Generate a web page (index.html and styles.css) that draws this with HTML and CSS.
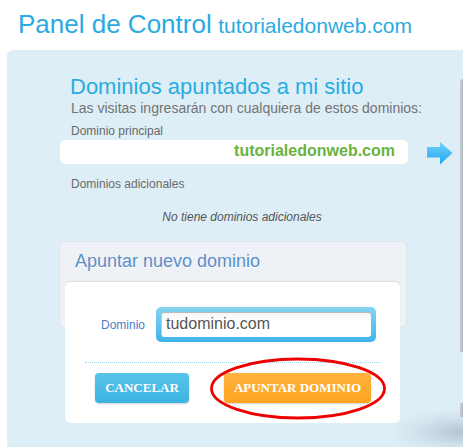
FILE: index.html
```html
<!DOCTYPE html>
<html lang="es">
<head>
<meta charset="utf-8">
<title>Panel de Control</title>
<link rel="stylesheet" href="styles.css">
</head>
<body>
<div class="header"><span class="h-big">Panel de Control</span> <span class="h-small">tutorialedonweb.com</span></div>
<div class="panel">
  <div class="edge edge-top"></div>
  <div class="edge edge-bottom"></div>
  <div class="floor-shadow"></div>
  <div class="section">
    <h2 class="heading">Dominios apuntados a mi sitio</h2>
    <p class="subtitle">Las visitas ingresarán con cualquiera de estos dominios:</p>
    <p class="label">Dominio principal</p>
    <div class="main-row">
      <div class="main-domain">tutorialedonweb.com</div>
      <svg class="arrow" width="26" height="23" viewBox="0 0 26 23">
        <defs>
          <linearGradient id="ag" x1="0" y1="0" x2="0" y2="1">
            <stop offset="0" stop-color="#6fd3fc"/>
            <stop offset="1" stop-color="#22a3ec"/>
          </linearGradient>
        </defs>
        <path d="M0 5 H13 V0 L25.5 11 L13 22.5 V15.5 H0 Z" fill="url(#ag)"/>
      </svg>
    </div>
    <p class="label label-extra">Dominios adicionales</p>
    <p class="empty">No tiene dominios adicionales</p>
    <div class="box">
      <h3 class="box-title">Apuntar nuevo dominio</h3>
      <div class="box-body">
        <div class="field-row">
          <span class="field-label">Dominio</span>
          <div class="input-frame"><div class="input-inner">tudominio.com</div></div>
        </div>
        <div class="divider"></div>
        <div class="buttons">
          <span class="btn btn-cancel">CANCELAR</span>
          <span class="btn btn-ok">APUNTAR DOMINIO</span>
        </div>
        <svg class="circle" width="182" height="66" viewBox="0 0 182 66">
          <ellipse cx="90" cy="32.5" rx="86.5" ry="29.5" fill="none" stroke="#ee0000" stroke-width="2.8"/>
        </svg>
      </div>
    </div>
  </div>
</div>
</body>
</html>
```
FILE: styles.css
```css
html, body {
  margin: 0;
  padding: 0;
  background: #ffffff;
  font-family: "Liberation Sans", Arial, sans-serif;
  overflow: hidden;
}

.header {
  height: 50px;
  box-sizing: border-box;
  padding: 9px 0 0 18px;
  line-height: 30px;
  color: #29aae2;
  white-space: nowrap;
}

.h-big {
  font-size: 26px;
}

.h-small {
  font-size: 21px;
  margin-left: 2px;
}

.panel {
  position: relative;
  overflow: hidden;
  margin-left: 7px;
  height: 397px;
  background: #ddeef7;
  border-top-left-radius: 6px;
  padding: 23px 0 0 53px;
  box-sizing: border-box;
}

.edge {
  position: absolute;
  left: 453px;
  width: 3px;
  background: linear-gradient(to right, #c9ced3, #b6bcc2);
}

.edge-top {
  top: 29px;
  height: 273px;
  border-top-left-radius: 3px;
}

.edge-bottom {
  top: 353px;
  height: 14px;
}

.floor-shadow {
  position: absolute;
  left: 380px;
  top: 358px;
  width: 150px;
  height: 48px;
  background: radial-gradient(ellipse at center, rgba(130, 145, 160, 0.45) 0%, rgba(160, 175, 190, 0.2) 40%, rgba(221, 238, 247, 0) 70%);
}

.section {
  width: 348px;
}

.heading {
  margin: 0 0 0 10px;
  font-size: 22px;
  font-weight: normal;
  line-height: 27px;
  color: #2aace2;
  white-space: nowrap;
}

.subtitle {
  margin: 0 0 0 11px;
  font-size: 14px;
  line-height: 16px;
  color: #737373;
  white-space: nowrap;
}

.label {
  margin: 8px 0 0 11px;
  font-size: 12px;
  line-height: 14px;
  color: #6a6a6a;
}

.label-extra {
  margin-top: 12px;
}

.main-row {
  display: flex;
  align-items: flex-start;
  gap: 19px;
  margin-top: 2px;
}

.main-domain {
  flex: none;
  width: 348px;
  height: 24px;
  box-sizing: border-box;
  background: #ffffff;
  border-radius: 5px;
  padding-right: 13px;
  text-align: right;
  font-size: 16px;
  font-weight: bold;
  line-height: 22px;
  color: #6ab23e;
}

.arrow {
  flex: none;
  margin-top: 2px;
  display: block;
}

.empty {
  margin: 19px 0 0;
  padding-left: 16px;
  text-align: center;
  font-size: 12px;
  line-height: 14px;
  font-style: italic;
  color: #555555;
}

.box {
  margin: 17px 0 0 -1px;
  width: 348px;
  height: 87px;
  box-sizing: border-box;
  background: #eef2f7;
  border: 1px solid #dde4ec;
  border-radius: 5px;
}

.box-title {
  margin: 8px 0 0 15px;
  font-size: 18px;
  font-weight: normal;
  line-height: 22px;
  color: #5a8ec7;
  text-shadow: 0 1px 0 #ffffff;
}

.box-body {
  position: relative;
  margin: 10px 0 0 5px;
  width: 335px;
  height: 141px;
  box-sizing: border-box;
  background: #ffffff;
  border-radius: 5px;
  box-shadow: 0 -1px 1px rgba(0, 0, 0, 0.08);
  padding: 25px 0 0;
}

.field-row {
  display: flex;
  align-items: baseline;
  gap: 11px;
  padding-left: 36px;
}

.field-label {
  font-size: 12px;
  color: #4a80c2;
}

.input-frame {
  width: 220px;
  padding: 5px;
  box-sizing: border-box;
  border-radius: 5px;
  background: linear-gradient(to bottom, #84d4f3, #3fb5eb);
}

.input-inner {
  height: 25px;
  box-sizing: border-box;
  background: linear-gradient(to bottom, #f6f6f6, #ffffff 40%);
  border-radius: 3px;
  border-top: 1px solid #b9b9b9;
  border-left: 1px solid #c6c6c6;
  padding-left: 4px;
  font-size: 16px;
  line-height: 21px;
  color: #555555;
}

.divider {
  margin: 20px 19px 0 20px;
  border-top: 1px dotted #9fd3e6;
}

.buttons {
  display: flex;
  gap: 35px;
  margin-top: 10px;
  padding-left: 30px;
}

.btn {
  display: block;
  height: 30px;
  line-height: 30px;
  border-radius: 4px;
  text-align: center;
  font-family: "Liberation Serif", "Times New Roman", serif;
  font-size: 13px;
  font-weight: bold;
  color: #ffffff;
  box-shadow: 0 1px 2px rgba(0, 0, 0, 0.18);
}

.btn-cancel {
  width: 94px;
  background: linear-gradient(to bottom, #58c4ea, #3cb3e2);
}

.btn-ok {
  width: 147px;
  background: linear-gradient(to bottom, #ffb23f, #ffa41f);
}

.circle {
  position: absolute;
  left: 143px;
  top: 74px;
  display: block;
}
```
